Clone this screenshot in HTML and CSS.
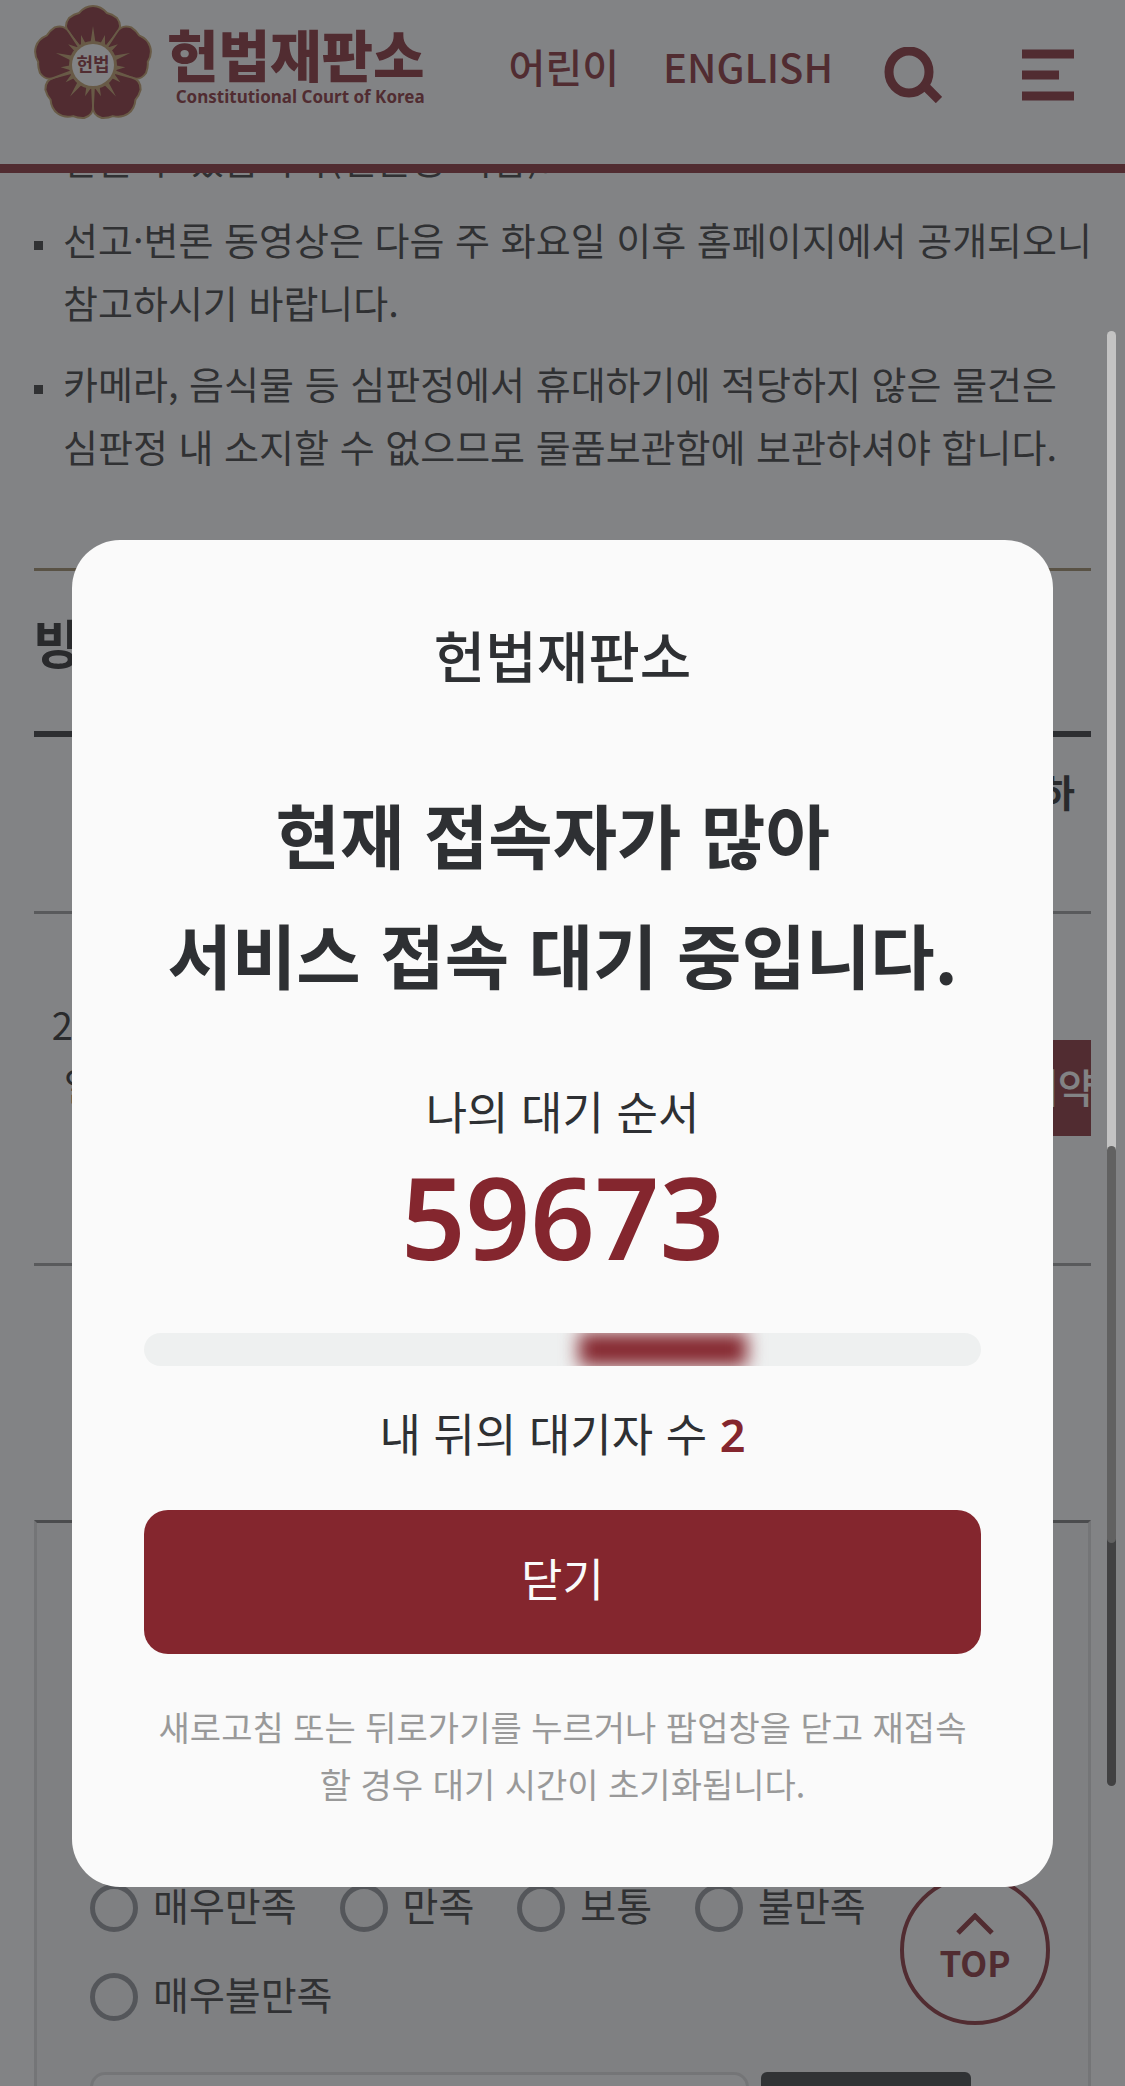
FILE: index.html
```html
<!DOCTYPE html>
<html lang="ko">
<head>
<meta charset="utf-8">
<meta name="viewport" content="width=device-width, initial-scale=1">
<title>헌법재판소</title>
<link rel="stylesheet" href="styles.css">
</head>
<body>
<header class="header">
  <a class="logo" href="#">
    <svg class="emblem" viewBox="0 0 120 116" aria-hidden="true">
      <defs>
        <path id="petal" d="M60 58 L36 28 Q30 21 36 13 Q41 9 46 8 Q52 1 60 1 Q68 1 74 8 Q79 9 84 13 Q90 21 84 28 Z"/>
        <path id="ray" d="M57 42 L60 22 L63 42Z M48 43 L48 31 L54 42Z M66 42 L72 31 L72 43Z"/>
      </defs>
      <g class="petals">
        <use href="#petal" transform="translate(0 1)"/>
        <use href="#petal" transform="rotate(72 60 61)"/>
        <use href="#petal" transform="rotate(144 60 61)"/>
        <use href="#petal" transform="rotate(216 60 61)"/>
        <use href="#petal" transform="rotate(288 60 61)"/>
      </g>
      <g class="rays">
        <circle cx="60" cy="61" r="24"/>
        <use href="#ray"/>
        <use href="#ray" transform="rotate(72 60 61)"/>
        <use href="#ray" transform="rotate(144 60 61)"/>
        <use href="#ray" transform="rotate(216 60 61)"/>
        <use href="#ray" transform="rotate(288 60 61)"/>
      </g>
      <circle class="core" cx="60" cy="61" r="21"/>
      <text class="core-text" x="60" y="67" text-anchor="middle">헌법</text>
    </svg>
    <span class="logo-text">
      <strong class="logo-name">헌법재판소</strong>
      <span class="logo-sub">Constitutional Court of Korea</span>
    </span>
  </a>
  <nav class="nav">
    <a class="nav-link" href="#">어린이</a>
    <a class="nav-link" href="#">ENGLISH</a>
  </nav>
  <div class="tools">
    <button class="icon-button" type="button" aria-label="검색">
      <svg width="58" height="56" viewBox="0 0 58 56"><ellipse cx="25" cy="25" rx="20" ry="21"/><path d="M40 38 L55 53"/></svg>
    </button>
    <button class="icon-button" type="button" aria-label="메뉴">
      <svg width="52" height="52" viewBox="0 0 52 52"><path d="M0 5H52M0 26H37M0 47H52"/></svg>
    </button>
  </div>
</header>

<main class="page">
  <ul class="notices">
    <li>받을 수 있습니다(신분증 지참).</li>
    <li>선고·변론 동영상은 다음 주 화요일 이후 홈페이지에서 공개되오니 참고하시기 바랍니다.</li>
    <li>카메라, 음식물 등 심판정에서 휴대하기에 적당하지 않은 물건은 심판정 내 소지할 수 없으므로 물품보관함에 보관하셔야 합니다.</li>
  </ul>
  <section class="booking">
    <h2 class="section-title">방청</h2>
    <table class="schedule">
      <thead>
        <tr><th class="col-date"></th><th></th><th class="col-action">하</th></tr>
      </thead>
      <tbody>
        <tr><td class="col-date">2025년<br>일(화)</td><td></td><td class="col-action"><button class="reserve" type="button">예약</button></td></tr>
      </tbody>
    </table>
  </section>
  <form class="survey">
    <div class="choices">
      <label class="choice"><input type="radio" name="rate">매우만족</label>
      <label class="choice"><input type="radio" name="rate">만족</label>
      <label class="choice"><input type="radio" name="rate">보통</label>
      <label class="choice"><input type="radio" name="rate">불만족</label>
      <label class="choice"><input type="radio" name="rate">매우불만족</label>
    </div>
    <div class="comment">
      <input class="comment-box" type="text" aria-label="의견">
      <button class="comment-send" type="button" aria-label="등록"></button>
    </div>
  </form>
</main>

<a class="to-top" href="#">
  <svg width="38" height="22" viewBox="0 0 38 22" aria-hidden="true"><path d="M2 20 L19 3 L36 20"/></svg>
  TOP
</a>

<div class="overlay">
  <section class="dialog" role="dialog" aria-modal="true" aria-labelledby="dialog-title">
    <h1 class="dialog-title" id="dialog-title">헌법재판소</h1>
    <p class="dialog-lead">현재 접속자가 많아&nbsp;<br>서비스 접속 대기 중입니다.</p>
    <p class="dialog-label">나의 대기 순서</p>
    <p class="dialog-count">59673</p>
    <div class="progress"><div class="progress-glow"></div></div>
    <p class="dialog-behind">내 뒤의 대기자 수 <b>2</b></p>
    <button class="dialog-close" type="button">닫기</button>
    <p class="dialog-note">새로고침 또는 뒤로가기를 누르거나 팝업창을 닫고 재접속할 경우 대기 시간이 초기화됩니다.</p>
  </section>
</div>
<div class="scroll-mark scroll-mark-light"></div>
<div class="scroll-mark scroll-mark-dark"></div>
</body>
</html>
```
FILE: styles.css
```css
:root {
  --maroon: #84262e;
  --ink: #2e3033;
  --shade: rgba(46, 49, 52, 0.6);
}

* { box-sizing: border-box; }

html, body { height: 100%; }

body {
  margin: 0;
  overflow: hidden;
  background: #fff;
  color: #333;
  font-family: "Noto Sans CJK KR", sans-serif;
  font-size: 38px;
}

p, h1, h2, ul { margin: 0; padding: 0; }
a { color: inherit; text-decoration: none; }
button { border: 0; padding: 0; font: inherit; }

/* Header */
.header {
  position: fixed;
  inset: 0 0 auto;
  z-index: 1;
  display: flex;
  align-items: flex-start;
  height: 173px;
  padding: 4px 51px 0 33px;
  border-bottom: 9px solid var(--maroon);
  background: #fff;
  color: var(--maroon);
}
.logo { display: flex; gap: 14px; }
.emblem { width: 120px; height: 116px; }
.petals { fill: var(--maroon); stroke: #bf9a63; stroke-width: 2; }
.rays { fill: #bf9a63; }
.core { fill: #fff; }
.core-text { fill: var(--maroon); font-size: 18px; font-weight: 700; }
.logo-text { display: flex; flex-direction: column; padding-top: 19px; }
.logo-name { font-size: 56px; font-weight: 900; line-height: 60px; }
.logo-sub {
  align-self: flex-end;
  font-family: "Noto Sans", sans-serif;
  font-size: 17px;
  font-weight: 700;
  line-height: 28px;
}
.nav { display: flex; gap: 44px; margin-left: 84px; padding-top: 34px; }
.nav-link { font-size: 40px; font-weight: 500; line-height: 56px; }
.tools { display: flex; gap: 80px; margin-left: auto; padding-top: 43px; }
.icon-button { display: block; height: 56px; background: none; color: inherit; }
.icon-button svg { display: block; fill: none; stroke: currentColor; stroke-width: 9; }

/* Page behind the dialog */
.page { padding: 126px 34px 0; }
.notices { display: flex; flex-direction: column; gap: 18px; margin-right: -8px; list-style: none; }
.notices li {
  position: relative;
  padding-left: 29px;
  line-height: 63px;
  word-break: keep-all;
}
.notices li::before {
  content: "";
  position: absolute;
  left: 0;
  top: 34px;
  width: 9px;
  height: 9px;
  background: #333;
}
.booking { margin-top: 91px; border-top: 3px solid #9a8560; }
.section-title { padding: 32px 0 50px; font-size: 52px; line-height: 78px; color: #222; }
.schedule {
  width: 100%;
  border-top: 6px solid #2c2c2e;
  border-collapse: collapse;
  table-layout: fixed;
  line-height: 60px;
  color: #222;
}
.schedule th, .schedule td { border-bottom: 3px solid #999; padding: 0; }
.schedule th { height: 178px; padding: 24px 16px; vertical-align: top; }
.schedule td { height: 352px; }
.schedule .col-date { width: 155px; padding-top: 80px; text-align: center; vertical-align: top; }
.col-action { width: 160px; text-align: right; }
.reserve {
  width: 120px;
  height: 96px;
  overflow: hidden;
  padding-bottom: 4px;
  background: var(--maroon);
  color: #fff;
  font-size: 40px;
  font-weight: 500;
  text-align: left;
  text-indent: 50px;
  white-space: nowrap;
  vertical-align: middle;
}
.survey {
  margin-top: 254px;
  padding: 357px 51px 0 53px;
  border: 3px solid #ddd;
  border-top-color: #777;
  background: #f7f7f7;
}
.choices { display: flex; flex-wrap: wrap; gap: 37px 43px; }
.choice { display: flex; align-items: flex-start; gap: 15px; font-size: 39px; line-height: 48px; }
.choice input {
  appearance: none;
  width: 48px;
  height: 48px;
  margin: 4px 0 0;
  border: 5px solid #8d9095;
  border-radius: 50%;
}
.comment { display: flex; gap: 12px; margin-top: 51px; margin-right: 66px; }
.comment-box {
  flex: 1;
  min-width: 0;
  height: 120px;
  border: 3px solid #ddd;
  border-radius: 15px;
  background: #fff;
}
.comment-send { width: 210px; height: 120px; border-radius: 6px; background: #363839; }

.to-top {
  position: fixed;
  right: 75px;
  bottom: 61px;
  display: flex;
  flex-direction: column;
  align-items: center;
  gap: 4px;
  width: 150px;
  height: 150px;
  padding-top: 34px;
  border: 4px solid var(--maroon);
  border-radius: 50%;
  background: #fff;
  color: var(--maroon);
  font-size: 35px;
  font-weight: 700;
  line-height: 46px;
}
.to-top svg { fill: none; stroke: currentColor; stroke-width: 5; }

/* Waiting dialog */
.overlay {
  position: fixed;
  inset: 0;
  z-index: 2;
  display: flex;
  align-items: flex-start;
  padding: 540px 72px 0;
  background: var(--shade);
}
.dialog {
  flex: 1;
  display: flex;
  flex-direction: column;
  padding: 72px 72px 75px;
  border-radius: 48px;
  background: #fafafa;
  color: var(--ink);
  text-align: center;
  font-size: 45px;
  line-height: 66px;
}
.dialog-title { font-size: 56px; font-weight: 500; line-height: 84px; }
.dialog-lead { margin: 78px 0 64px; font-size: 70px; font-weight: 700; line-height: 120px; }
.dialog-count, .dialog-behind b {
  color: var(--maroon);
  font-family: "Noto Sans", sans-serif;
  font-weight: 600;
}
.dialog-count { font-size: 113px; line-height: 144px; }
.progress {
  height: 33px;
  margin: 45px 0 34px;
  overflow: hidden;
  border-radius: 17px;
  background: #eef0f0;
}
.progress-glow {
  width: 20%;
  height: 33px;
  margin-left: 52%;
  background: var(--maroon);
  filter: blur(9px);
}
.dialog-close {
  height: 144px;
  margin: 42px 0 44px;
  padding-bottom: 8px;
  border-radius: 24px;
  background: var(--maroon);
  color: #fafafa;
}
.dialog-note { color: #999; font-size: 34px; line-height: 57px; }

/* Scroll indicators */
.scroll-mark {
  position: fixed;
  right: 9px;
  z-index: 3;
  width: 9px;
  border-radius: 5px;
}
.scroll-mark-light { top: 331px; height: 1212px; background: #c3c3c3; }
.scroll-mark-dark { top: 1146px; height: 640px; background: rgba(0, 0, 0, 0.5); }
```
